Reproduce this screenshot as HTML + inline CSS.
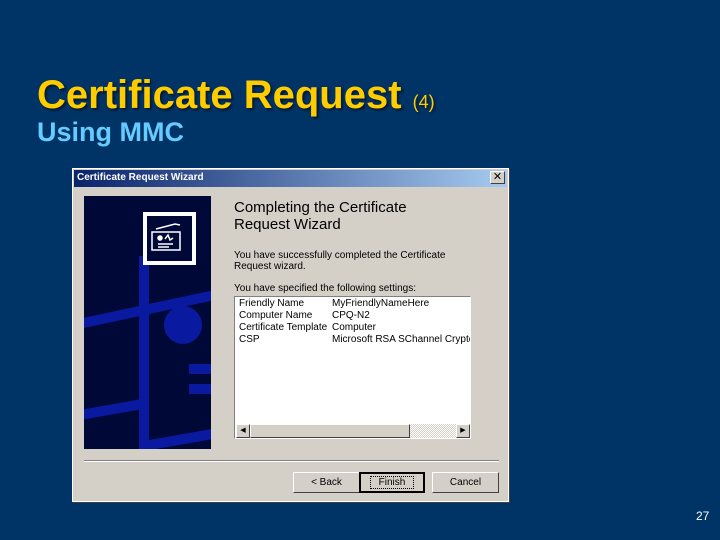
<!DOCTYPE html>
<html><head><style>
body{margin:0;width:720px;height:540px;background:#003366;position:relative;overflow:hidden;font-family:"Liberation Sans",sans-serif}
.a{position:absolute}
.t{font-size:11px;font-family:"Liberation Sans",sans-serif;color:#000;white-space:nowrap}
</style></head><body>
<div class="a" style="left:37px;top:73px;color:#FFCC00;font-weight:bold;font-size:40px;text-shadow:2px 2px 2px #001a33;white-space:nowrap">Certificate Request <span style="font-size:18px;font-weight:normal">(4)</span></div>
<div class="a" style="left:37px;top:117px;color:#66CCFF;font-weight:bold;font-size:27px">Using MMC</div>
<div class="a" style="left:72px;top:168px;width:437px;height:334px;background:#d4d0c8;border:1px solid #fff;box-sizing:border-box;box-shadow:1px 1px 0 #404040"></div>
<div class="a" style="left:74px;top:170px;width:433px;height:17px;background:linear-gradient(90deg,#0a246a,#a6caf0)"></div>
<div class="a t" style="left:77px;top:172px;color:#fff;font-weight:bold;font-size:10px">Certificate Request Wizard</div>
<div class="a" style="left:490px;top:171px;width:15px;height:13px;background:#d4d0c8;border:1px solid;border-color:#fff #404040 #404040 #fff;box-sizing:border-box;font-size:11px;line-height:11px;text-align:center">✕</div>
<div class="a" style="left:84px;top:196px;width:127px;height:253px;background:#000838;overflow:hidden">
<div class="a" style="left:55px;top:60px;width:10px;height:200px;background:#0a1aa0"></div>
<div class="a" style="left:80px;top:110px;width:38px;height:38px;border-radius:50%;background:#0a1aa0"></div>
<div class="a" style="left:-10px;top:108px;width:150px;height:10px;background:#0a1aa0;transform:rotate(-12deg)"></div>
<div class="a" style="left:-5px;top:208px;width:70px;height:10px;background:#0a1aa0;transform:rotate(-10deg)"></div>
<div class="a" style="left:60px;top:238px;width:80px;height:10px;background:#0a1aa0;transform:rotate(-10deg)"></div>
<div class="a" style="left:105px;top:168px;width:30px;height:10px;background:#0a1aa0"></div>
<div class="a" style="left:105px;top:188px;width:30px;height:10px;background:#0a1aa0"></div>
<div class="a" style="left:59px;top:16px;width:53px;height:53px;background:#fff"></div>
<div class="a" style="left:63px;top:20px;width:45px;height:45px;background:#000838"></div>
<svg class="a" style="left:63px;top:20px" width="45" height="45"><g fill="none" stroke="#fff" stroke-width="1.5"><path d="M9 13 L28 8 L33 9"/><path d="M5 16 H33 V34 H5 Z"/><circle cx="13" cy="22" r="2" fill="#fff"/><path d="M18 23 l3 -4 l2 5 l3 -2 M11 28 H26 M11 31 H22"/></g></svg>
</div>
<div class="a t" style="left:234px;top:199px;font-size:15px;line-height:17px;color:#000">Completing the Certificate<br>Request Wizard</div>
<div class="a t" style="left:234px;top:250px;font-size:10px;line-height:11px">You have successfully completed the Certificate<br>Request wizard.</div>
<div class="a t" style="left:234px;top:283px;font-size:10px">You have specified the following settings:</div>
<div class="a" style="left:234px;top:296px;width:237px;height:143px;background:#fff;border:1px solid;border-color:#808080 #fff #fff #808080;box-sizing:border-box;overflow:hidden">
<div class="a t" style="left:4px;top:1px;font-size:10px;line-height:12px">Friendly Name<br>Computer Name<br>Certificate Template<br>CSP</div>
<div class="a t" style="left:97px;top:1px;font-size:10px;line-height:12px">MyFriendlyNameHere<br>CPQ-N2<br>Computer<br>Microsoft RSA SChannel Cryptog</div>
<div class="a" style="left:1px;top:127px;width:234px;height:14px;background:repeating-conic-gradient(#d4d0c8 0 25%,#fff 0 50%) 0 0/2px 2px"></div>
<div class="a" style="left:1px;top:127px;width:14px;height:14px;background:#d4d0c8;border:1px solid;border-color:#fff #404040 #404040 #fff;box-sizing:border-box;font-size:7px;line-height:12px;text-align:center">◀</div>
<div class="a" style="left:15px;top:127px;width:160px;height:14px;background:#d4d0c8;border:1px solid;border-color:#fff #404040 #404040 #fff;box-sizing:border-box"></div>
<div class="a" style="left:221px;top:127px;width:14px;height:14px;background:#d4d0c8;border:1px solid;border-color:#fff #404040 #404040 #fff;box-sizing:border-box;font-size:7px;line-height:12px;text-align:center">▶</div>
</div>
<div class="a" style="left:84px;top:460px;width:415px;height:1px;background:#808080;border-bottom:1px solid #fff"></div>
<div class="a t" style="left:293px;top:472px;width:67px;height:21px;border:1px solid;border-color:#fff #404040 #404040 #fff;box-sizing:border-box;text-align:center;line-height:19px;font-size:10px">&lt; Back</div>
<div class="a t" style="left:359px;top:472px;width:66px;height:21px;border:2px solid #000;box-sizing:border-box;text-align:center;line-height:17px;font-size:10px"><span style="outline:1px dotted #000;padding:0 8px">Finish</span></div>
<div class="a t" style="left:432px;top:472px;width:67px;height:21px;border:1px solid;border-color:#fff #404040 #404040 #fff;box-sizing:border-box;text-align:center;line-height:19px;font-size:10px">Cancel</div>
<div class="a" style="left:696px;top:509px;color:#fff;font-size:12px">27</div>
</body></html>
